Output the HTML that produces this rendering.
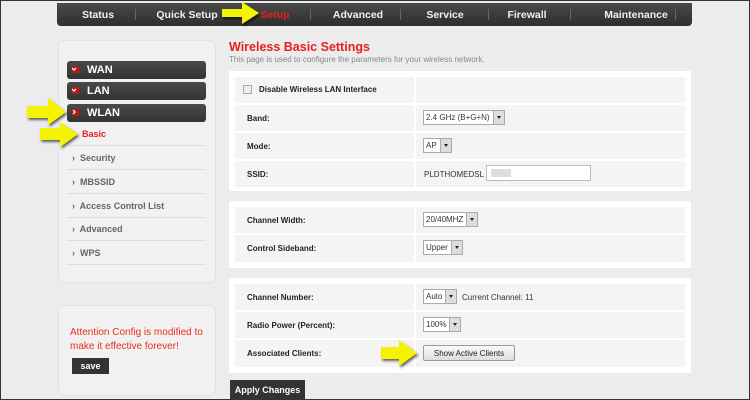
<!DOCTYPE html>
<html><head><meta charset="utf-8"><style>
*{margin:0;padding:0;box-sizing:border-box}
body{width:750px;height:400px;overflow:hidden;background:#ececec;font-family:"Liberation Sans",Arial,sans-serif;position:relative;}
.a{position:absolute}
.frame{left:0;top:0;width:750px;height:400px;border:1px solid #333;pointer-events:none}
.nav{left:57px;top:3px;width:635px;height:23px;background:linear-gradient(#4a4a4a,#2e2e2e);border-radius:0 0 4px 4px}
.nav span{position:absolute;top:6px;color:#f0f0f0;font-weight:bold;font-size:10.5px;transform:translateX(-50%);white-space:nowrap}
.sep{position:absolute;top:6px;width:1px;height:11px;background:#666}
.box{background:#f1f1f1;border:1px solid #e2e2e2;border-radius:6px}
.bar{left:67px;width:139px;height:18px;background:linear-gradient(#4a4a4a,#333);border-radius:3px;color:#fff;font-weight:bold;font-size:11px;padding:3px 0 0 20px}
.bar i{position:absolute;left:5px;top:5px;width:7px;height:7px;background:#c01818;border-radius:1px}
.sub{left:72px;font-size:9px;color:#666;font-weight:bold}
.line{left:67px;width:139px;height:1px;background:#ddd}
.panel{background:#fff;left:229px;width:462px}
.row{position:absolute;left:6px;width:450px;background:#f4f4f4}
.row .c2{position:absolute;left:179px;top:0;bottom:0;width:2px;background:#fff}
.lbl{position:absolute;left:12px;font-size:8px;font-weight:bold;color:#222}
.sel{position:absolute;left:188px;height:15px;border:1px solid #aaa;background:#fff;font-size:8px;color:#333;padding:2px 14px 0 2px;white-space:nowrap}
.sel b{position:absolute;right:0;top:0;width:11px;height:13px;background:#ddd;border-left:1px solid #aaa}
.sel b:after{content:"";position:absolute;left:3px;top:5px;border:2.5px solid transparent;border-top:3px solid #222}
.txt{position:absolute;font-size:8px;color:#333}
</style></head><body>
<div class="a nav">
<span style="left:41px">Status</span><span style="left:130px">Quick Setup</span><span style="left:218px;color:#e8201c">Setup</span><span style="left:301px">Advanced</span><span style="left:388px">Service</span><span style="left:470px">Firewall</span><span style="left:579px">Maintenance</span>
<div class="sep" style="left:78px"></div><div class="sep" style="left:253px"></div><div class="sep" style="left:343px"></div><div class="sep" style="left:431px"></div><div class="sep" style="left:513px"></div><div class="sep" style="left:618px"></div>
</div>
<div class="a box" style="left:58px;top:40px;width:158px;height:243px"></div>
<div class="a bar" style="top:61px"><i></i>WAN</div>
<div class="a bar" style="top:82px"><i></i>LAN</div>
<div class="a bar" style="top:104px"><i></i>WLAN</div>
<div class="a sub" style="left:82px;top:129px;color:#e8201c">Basic</div>
<div class="a line" style="top:145px"></div>
<div class="a sub" style="top:153px">›&nbsp; Security</div>
<div class="a line" style="top:169px"></div>
<div class="a sub" style="top:177px">›&nbsp; MBSSID</div>
<div class="a line" style="top:193px"></div>
<div class="a sub" style="top:201px">›&nbsp; Access Control List</div>
<div class="a line" style="top:217px"></div>
<div class="a sub" style="top:224px">›&nbsp; Advanced</div>
<div class="a line" style="top:240px"></div>
<div class="a sub" style="top:248px">›&nbsp; WPS</div>
<div class="a line" style="top:264px"></div>
<div class="a box" style="left:58px;top:305px;width:158px;height:91px"></div>
<div class="a" style="left:70px;top:326px;font-size:10px;color:#e8301c;line-height:14px">Attention Config is modified to<br>make it effective forever!</div>
<div class="a" style="left:72px;top:358px;width:37px;height:16px;background:#333;color:#fff;font-size:9px;font-weight:bold;text-align:center;padding-top:3px">save</div>

<div class="a" style="left:229px;top:40px;font-size:12.5px;font-weight:bold;color:#e8201c">Wireless Basic Settings</div>
<div class="a" style="left:229px;top:55px;font-size:8px;color:#888">This page is used to configure the parameters for your wireless network.</div>

<div class="a panel" style="top:71px;height:120px">
<div class="row" style="top:6px;height:26px"><div class="c2"></div><div class="a" style="left:8px;top:8px;width:9px;height:9px;border:1px solid #aaa;background:#eee"></div><div class="lbl" style="left:24px;top:8px">Disable Wireless LAN Interface</div></div>
<div class="row" style="top:34px;height:26px"><div class="c2"></div><div class="lbl" style="top:9px">Band:</div><div class="sel" style="top:5px">2.4 GHz (B+G+N)<b></b></div></div>
<div class="row" style="top:62px;height:26px"><div class="c2"></div><div class="lbl" style="top:9px">Mode:</div><div class="sel" style="top:5px">AP<b></b></div></div>
<div class="row" style="top:90px;height:26px"><div class="c2"></div><div class="lbl" style="top:9px">SSID:</div><div class="txt" style="left:189px;top:9px">PLDTHOMEDSL</div><div class="a" style="left:251px;top:4px;width:105px;height:16px;border:1px solid #bbb;background:#fff"><div class="a" style="left:4px;top:3px;width:20px;height:8px;background:#ddd"></div></div></div>
</div>
<div class="a panel" style="top:201px;height:67px">
<div class="row" style="top:6px;height:26px"><div class="c2"></div><div class="lbl" style="top:9px">Channel Width:</div><div class="sel" style="top:5px">20/40MHZ<b></b></div></div>
<div class="row" style="top:34px;height:27px"><div class="c2"></div><div class="lbl" style="top:9px">Control Sideband:</div><div class="sel" style="top:5px">Upper<b></b></div></div>
</div>
<div class="a panel" style="top:278px;height:95px">
<div class="row" style="top:6px;height:26px"><div class="c2"></div><div class="lbl" style="top:9px">Channel Number:</div><div class="sel" style="top:5px">Auto<b></b></div><div class="txt" style="left:227px;top:9px">Current Channel: 11</div></div>
<div class="row" style="top:34px;height:26px"><div class="c2"></div><div class="lbl" style="top:9px">Radio Power (Percent):</div><div class="sel" style="top:5px">100%<b></b></div></div>
<div class="row" style="top:62px;height:27px"><div class="c2"></div><div class="lbl" style="top:9px">Associated Clients:</div><div class="a" style="left:188px;top:5px;width:92px;height:16px;border:1px solid #999;border-radius:2px;background:linear-gradient(#fafafa,#ddd);font-size:8px;color:#222;text-align:center;padding-top:3px">Show Active Clients</div></div>
</div>
<div class="a" style="left:230px;top:380px;width:75px;height:20px;background:#333;color:#fff;font-size:9px;font-weight:bold;text-align:center;padding-top:5px">Apply Changes</div>

<svg class="a" style="left:0;top:0" width="750" height="400">
<defs><filter id="s"><feDropShadow dx="1.5" dy="2" stdDeviation="1.2" flood-color="#000" flood-opacity="0.6"/></filter></defs>
<g fill="#f4f400" filter="url(#s)">
<polygon points="222,9 242,9 242,2 259,13 242,24 242,17 222,17"/>
<polygon points="27,106 48,106 48,98 66,112 48,125 48,118 27,118"/>
<polygon points="40,128 60,128 60,122 78,134 60,147 60,140 40,140"/>
<polygon points="381,347 399,347 399,340 417,353 399,366 399,359 381,359"/>
</g>
<g><polyline points="72,68 74,70 76,68" stroke="#fff" fill="none" stroke-width="1.2"/><polyline points="72,89 74,91 76,89" stroke="#fff" fill="none" stroke-width="1.2"/><polyline points="73,110 75,112 73,114" stroke="#fff" fill="none" stroke-width="1.2"/></g>
</svg>
<div class="a frame"></div>
</body></html>
